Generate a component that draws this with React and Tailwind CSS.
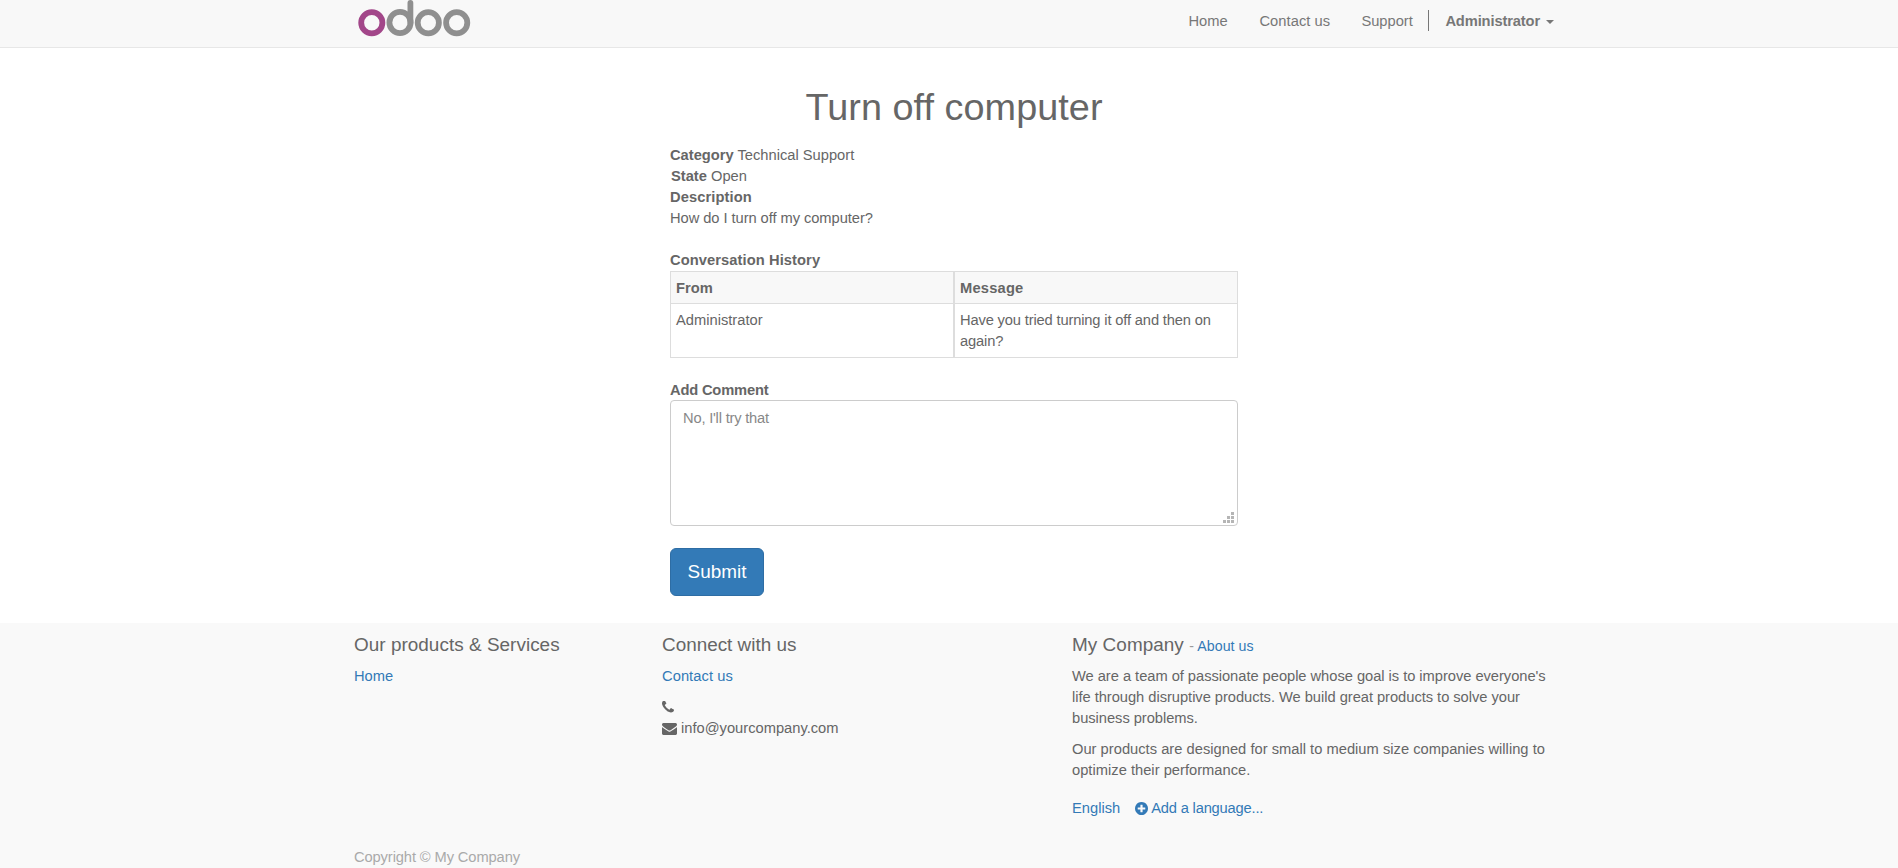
function PhoneIcon() {
  return (
    <svg width="12" height="12" viewBox="192 192 1408 1408" fill="currentColor" aria-hidden="true">
      <path d="M1600 1240q0 27-10 70.5t-21 68.5q-21 50-122 106-94 51-186 51-27 0-53-3.5t-57.5-12.5-47-14.5-55.5-20.5-49-18q-98-35-175-83-127-79-264-216t-216-264q-48-77-83-175-3-9-18-49t-20.5-55.5-14.5-47-12.5-57.5-3.5-53q0-92 51-186 56-101 106-122 25-11 68.5-21t70.5-10q14 0 21 3 18 6 53 76 11 19 30 54t35 63.5 31 53.5q3 4 17.5 25t21.5 35.5 7 28.5q0 20-28.5 50t-62 55-62 53-28.5 46q0 9 5 22.5t8.5 20.5 14 24 11.5 19q76 137 174 235t235 174q2 1 19 11.5t24 14 20.5 8.5 22.5 5q18 0 46-28.5t53-62 55-62 50-28.5q14 0 28.5 7t35.5 21.5 25 17.5q25 15 53.5 31t63.5 35 54 30q70 35 76 53 3 7 3 21z" />
    </svg>
  );
}

function EnvelopeIcon() {
  return (
    <svg width="15" height="12" viewBox="0 256 1792 1408" fill="currentColor" aria-hidden="true">
      <path d="M1792 710v794q0 66-47 113t-113 47h-1472q-66 0-113-47t-47-113v-794q44 49 101 87 362 246 497 345 57 42 92.5 65.5t94.5 48 110 24.5h2q51 0 110-24.5t94.5-48 92.5-65.5q170-123 498-345 57-39 100-87zm0-294q0 79-49 151t-122 123q-376 261-468 325-10 7-42.5 31t-54 38.5-52 32.5-57.5 27-50 9h-2q-23 0-50-9t-57.5-27-52-32.5-54-38.5-42.5-31q-91-64-262-182.5t-205-142.5q-62-42-117-115.5t-55-136.5q0-78 41.5-130t118.5-52h1472q65 0 112.5 47t47.5 113z" />
    </svg>
  );
}

function PlusCircleIcon() {
  return (
    <svg width="13" height="13" viewBox="128 128 1536 1536" fill="currentColor" aria-hidden="true">
      <path d="M1344 960v-128q0-26-19-45t-45-19h-256v-256q0-26-19-45t-45-19h-128q-26 0-45 19t-19 45v256h-256q-26 0-45 19t-19 45v128q0 26 19 45t45 19h256v256q0 26 19 45t45 19h128q26 0 45-19t19-45v-256h256q26 0 45-19t19-45zm320-64q0 209-103 385.5t-279.5 279.5-385.5 103-385.5-103-279.5-279.5-103-385.5 103-385.5 279.5-279.5 385.5-103 385.5 103 279.5 279.5 103 385.5z" />
    </svg>
  );
}

function Logo() {
  return (
    <svg width="113" height="38" viewBox="0 0 113 38" fill="none" strokeWidth="5.8" aria-label="odoo">
      <circle cx="13.8" cy="22.7" r="10.6" stroke="#a24689" />
      <circle cx="42" cy="22.5" r="10.6" stroke="#8f8f8f" />
      <path d="M52.4 22.5V3" stroke="#8f8f8f" strokeLinecap="round" />
      <circle cx="70.3" cy="22.7" r="10.6" stroke="#8f8f8f" />
      <circle cx="98.7" cy="22.7" r="10.6" stroke="#8f8f8f" />
    </svg>
  );
}

function Navbar() {
  return (
    <header className="h-[48px] bg-[#f8f8f8] border-b border-[#e7e7e7]">
      <div className="mx-auto w-[1210px] pl-[14px] flex items-start">
        <div className="w-[827px]"><Logo /></div>
        <nav className="flex pt-[10px] text-[#777]">
          <a className="w-[71px] pt-px pl-[4px]">Home</a>
          <a className="w-[102px] pt-px pl-[4px] tracking-[0.06px]">Contact us</a>
          <a className="w-[71px] pt-px pl-[4px]">Support</a>
          <span className="w-px h-[21px] bg-[#777]" />
          <a className="pl-[16px] pt-px font-bold flex items-center gap-[6px] tracking-[-0.13px]">
            Administrator
            <span className="mt-px border-x-4 border-x-transparent border-t-4 border-t-[#777]" />
          </a>
        </nav>
      </div>
    </header>
  );
}

function Ticket() {
  return (
    <main className="h-[575px] pt-[38px]">
      <div className="w-[568px] ml-[670px]">
        <h1 className="h-[59px] text-center text-[37.8px] leading-[42px] tracking-[0.05px]">Turn off computer</h1>
        <p><b>Category</b> Technical Support</p>
        <p className="pl-px"><b>State</b> Open</p>
        <p><b className="tracking-[0.1px]">Description</b></p>
        <p className="tracking-[-0.06px]">How do I turn off my computer?</p>
        <p className="mt-[21px] font-bold tracking-[0.08px]">Conversation History</p>
        <table className="w-full table-fixed border-collapse text-left">
          <thead>
            <tr className="bg-[#f8f8f8]">
              <th className="h-[32px] border border-r-2 border-[#ddd] px-[5px] pt-px">From</th>
              <th className="border border-[#ddd] px-[5px] pt-px tracking-[0.2px]">Message</th>
            </tr>
          </thead>
          <tbody>
            <tr className="align-top">
              <td className="h-[54px] border border-r-2 border-[#ddd] px-[5px] pt-[6px]">Administrator</td>
              <td className="border border-[#ddd] px-[5px] pt-[6px] tracking-[-0.15px]">Have you tried turning it off and then on again?</td>
            </tr>
          </tbody>
        </table>
        <p className="mt-[22px] h-[20px] font-bold tracking-[-0.18px]">Add Comment</p>
        <div className="relative">
          <textarea
            className="block w-full h-[126px] resize-none rounded-[4px] border border-[#ccc] bg-white px-[12px] py-[7px] tracking-[-0.2px] text-[#555] placeholder:text-[#888] outline-none"
            placeholder="No, I'll try that"
          />
          <svg className="absolute right-[4px] bottom-[3px]" width="11" height="11" fill="#b5b5b5">
            <path d="M8 0h3v3h-3zM4 4h3v3h-3zM8 4h3v3h-3zM0 8h3v3h-3zM4 8h3v3h-3zM8 8h3v3h-3z" />
          </svg>
        </div>
        <button className="mt-[22px] block h-[48px] w-[94px] rounded-[6px] border border-[#2e6da4] bg-[#337ab7] pb-[2px] text-[18.9px] text-white">Submit</button>
      </div>
    </main>
  );
}

function Footer() {
  return (
    <footer className="h-[245px] overflow-hidden bg-[#f9f9f9] pt-[11px] pl-[354px]">
      <div className="flex h-[213px]">
        <section className="w-[308px]">
          <h4 className="h-[32px] text-[18.9px] tracking-[0.04px]">Our products &amp; Services</h4>
          <a className="text-[#337ab7]">Home</a>
        </section>
        <section className="w-[410px]">
          <h4 className="h-[32px] text-[18.9px]">Connect with us</h4>
          <a className="text-[#337ab7] tracking-[0.06px]">Contact us</a>
          <p className="mt-[9px] flex h-[22px] items-center"><PhoneIcon /></p>
          <p className="flex items-center gap-[4px]"><EnvelopeIcon />info@yourcompany.com</p>
        </section>
        <section className="w-[482px]">
          <h4 className="h-[32px] text-[18.9px] tracking-[0.06px]">
            My Company <small className="text-[14.2px] text-[#999]">- <a className="text-[#337ab7]">About us</a></small>
          </h4>
          <p className="tracking-[-0.035px]">We are a team of passionate people whose goal is to improve everyone's life through disruptive products. We build great products to solve your business problems.</p>
          <p className="mt-[10px] tracking-[0.015px]">Our products are designed for small to medium size companies willing to optimize their performance.</p>
          <div className="mt-[17px] flex gap-[15px] text-[#337ab7]">
            <a>English</a>
            <a className="flex items-center gap-[3px] tracking-[-0.18px]"><PlusCircleIcon />Add a language...</a>
          </div>
        </section>
      </div>
      <p className="text-[#aaa] tracking-[-0.11px]">Copyright © My Company</p>
    </footer>
  );
}

export default function App() {
  return (
    <div className="h-[868px] overflow-hidden bg-white font-['Liberation_Sans',Arial,sans-serif] text-[14.7px] leading-[21px] text-[#666]">
      <Navbar />
      <Ticket />
      <Footer />
    </div>
  );
}
